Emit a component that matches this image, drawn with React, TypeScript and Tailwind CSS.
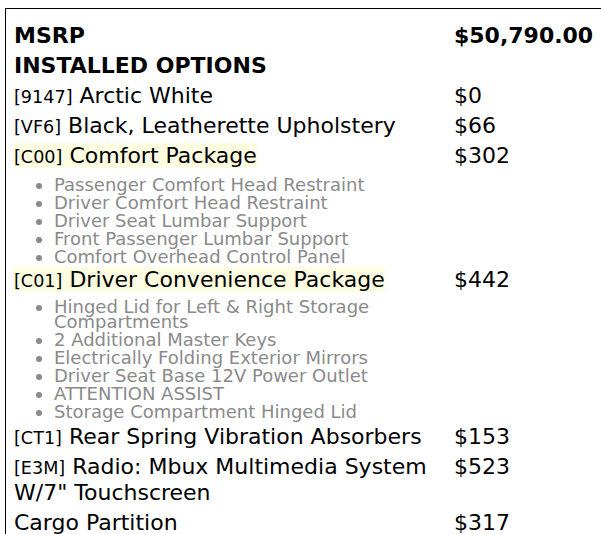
import React from "react";

type Row =
  | { kind: "head"; label: string; price?: string }
  | { kind: "item"; code?: string; name: string; price: string; highlight?: boolean }
  | { kind: "list"; items: string[]; pad: string };

const rows: Row[] = [
  { kind: "head", label: "MSRP", price: "$50,790.00" },
  { kind: "head", label: "INSTALLED OPTIONS" },
  { kind: "item", code: "[9147]", name: "Arctic White", price: "$0" },
  { kind: "item", code: "[VF6]", name: "Black, Leatherette Upholstery", price: "$66" },
  { kind: "item", code: "[C00]", name: "Comfort Package", price: "$302", highlight: true },
  {
    kind: "list",
    pad: "pt-[6.5px] pb-[0.5px]",
    items: [
      "Passenger Comfort Head Restraint",
      "Driver Comfort Head Restraint",
      "Driver Seat Lumbar Support",
      "Front Passenger Lumbar Support",
      "Comfort Overhead Control Panel",
    ],
  },
  { kind: "item", code: "[C01]", name: "Driver Convenience Package", price: "$442", highlight: true },
  {
    kind: "list",
    pad: "pt-[4.5px] pb-[2.5px]",
    items: [
      "Hinged Lid for Left & Right Storage Compartments",
      "2 Additional Master Keys",
      "Electrically Folding Exterior Mirrors",
      "Driver Seat Base 12V Power Outlet",
      "ATTENTION ASSIST",
      "Storage Compartment Hinged Lid",
    ],
  },
  { kind: "item", code: "[CT1]", name: "Rear Spring Vibration Absorbers", price: "$153" },
  { kind: "item", code: "[E3M]", name: "Radio: Mbux Multimedia System W/7\" Touchscreen", price: "$523" },
  { kind: "item", name: "Cargo Partition", price: "$317" },
  { kind: "item", name: "Floor Mats", price: "$0" },
];

function Label({ code, name }: { code?: string; name: string }) {
  return (
    <>
      {code && <span className="text-[17.6px] leading-none">{code}</span>}
      {code && " "}
      {name}
    </>
  );
}

export default function App() {
  return (
    <div className="h-[534px] w-[601px] overflow-hidden bg-white font-['DejaVu_Sans',sans-serif] text-black">
      <div className="ml-[5px] mt-[8px] w-[700px] border-l border-t border-black pl-[8px] pt-[11.8px]">
        <div className="grid grid-cols-[440px_200px] text-[22px] leading-[26px]">
          {rows.map((r, i) => {
            if (r.kind === "head") {
              return (
                <React.Fragment key={i}>
                  <div className="py-[2px] font-bold">{r.label}</div>
                  <div className="py-[2px] font-bold">{r.price ?? ""}</div>
                </React.Fragment>
              );
            }
            if (r.kind === "list") {
              return (
                <React.Fragment key={i}>
                  <ul className={`list-disc space-y-[3px] pl-[40px] text-[18px] leading-[15px] text-[#8a8a8a] ${r.pad}`}>
                    {r.items.map((it) => (
                      <li key={it}>{it}</li>
                    ))}
                  </ul>
                  <div />
                </React.Fragment>
              );
            }
            return (
              <React.Fragment key={i}>
                <div className="py-[2px]">
                  {r.highlight ? (
                    <span className="bg-[#fdfde2] leading-[normal]">
                      <Label code={r.code} name={r.name} />
                    </span>
                  ) : (
                    <Label code={r.code} name={r.name} />
                  )}
                </div>
                <div className="py-[2px]">{r.price}</div>
              </React.Fragment>
            );
          })}
        </div>
      </div>
    </div>
  );
}
